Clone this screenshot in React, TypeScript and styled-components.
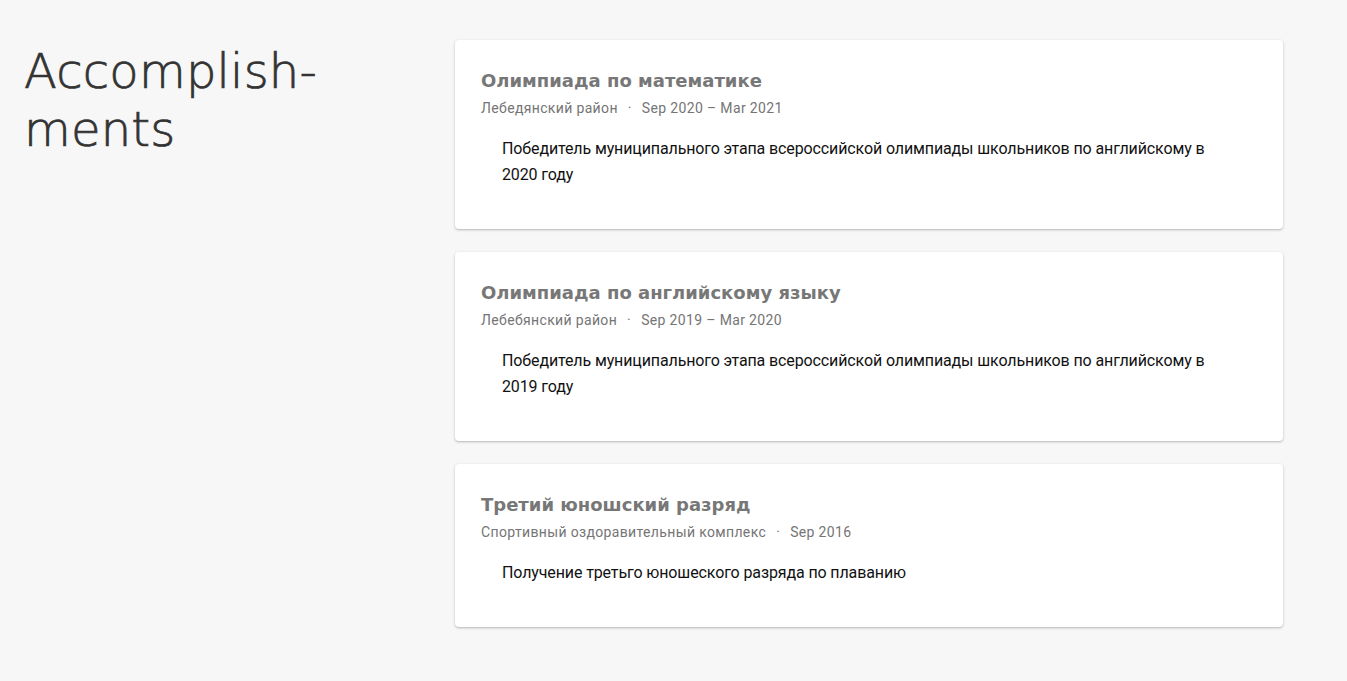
import React from "react";
import styled, { createGlobalStyle } from "styled-components";

const Global = createGlobalStyle`
  html, body { margin: 0; padding: 0; background: #f7f7f7; }
  body { font-family: Roboto, "Noto Sans", sans-serif; }
`;

const Page = styled.div`
  display: grid;
  grid-template-columns: 431px 828px;
  padding: 40px 64px 40px 24px;
  min-height: 681px;
  box-sizing: border-box;
`;

const Heading = styled.h1`
  margin: 0;
  padding-top: 2px;
  font-family: "DejaVu Sans", sans-serif;
  font-weight: 200;
  font-size: 48px;
  line-height: 58px;
  color: #333;
  -webkit-text-stroke: 0.7px #333;
  letter-spacing: 0.2px;
`;

const List = styled.div`
  display: flex;
  flex-direction: column;
  gap: 23px;
`;

const Card = styled.section`
  background: #fff;
  border-radius: 4px;
  box-shadow: 0 1px 3px rgba(0, 0, 0, 0.22), 0 1px 1px rgba(0, 0, 0, 0.06);
  padding: 29px 26px 41px 26px;
  box-sizing: border-box;
`;

const Title = styled.h2`
  margin: 0;
  font-family: "DejaVu Sans", sans-serif;
  font-weight: 700;
  font-size: 18px;
  line-height: 24px;
  color: #777;
`;

const Meta = styled.div`
  margin-top: 5px;
  font-size: 14px;
  line-height: 20px;
  color: #757575;
  letter-spacing: 0.35px;
`;

const Dot = styled.span`
  margin: 0 10px;
`;

const Body = styled.p`
  margin: 18px 21px 0 21px;
  font-size: 16px;
  line-height: 26px;
  letter-spacing: -0.12px;
  color: #111;
`;

const items = [
  {
    title: "Олимпиада по математике",
    org: "Лебедянский район",
    date: "Sep 2020 – Mar 2021",
    text: "Победитель муниципального этапа всероссийской олимпиады школьников по английскому в 2020 году",
  },
  {
    title: "Олимпиада по английскому языку",
    org: "Лебебянский район",
    date: "Sep 2019 – Mar 2020",
    text: "Победитель муниципального этапа всероссийской олимпиады школьников по английскому в 2019 году",
  },
  {
    title: "Третий юношский разряд",
    org: "Спортивный оздоравительный комплекс",
    date: "Sep 2016",
    text: "Получение третьго юношеского разряда по плаванию",
  },
];

export default function App() {
  return (
    <>
      <Global />
      <Page>
        <Heading>
          Accomplish-
          <br />
          ments
        </Heading>
        <List>
          {items.map((it) => (
            <Card key={it.title}>
              <Title>{it.title}</Title>
              <Meta>
                {it.org}
                <Dot>·</Dot>
                {it.date}
              </Meta>
              <Body>{it.text}</Body>
            </Card>
          ))}
        </List>
      </Page>
    </>
  );
}
